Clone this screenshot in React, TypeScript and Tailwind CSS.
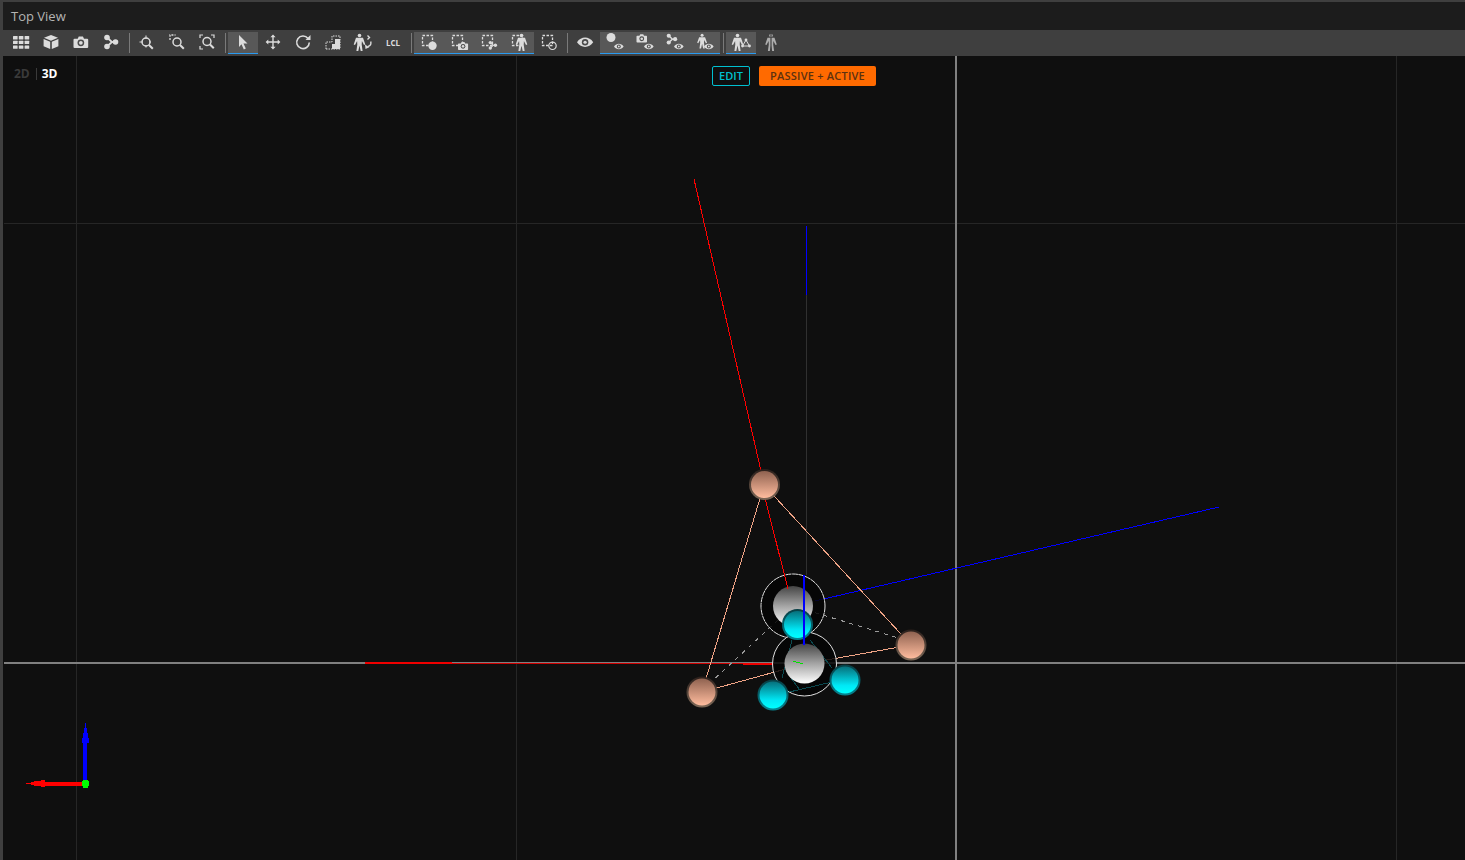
import type { ReactNode } from "react";

const fontFamily = "font-['Open_Sans','Noto_Sans',sans-serif]";
const ink = "#dcdcdc";

const Body = ({ x = 0, y = 0, s = 1 }: { x?: number; y?: number; s?: number }) => (
  <g transform={`translate(${x} ${y}) scale(${s})`}>
    <circle cx="6" cy="2" r="1.800" />
    <path d="M2.500 4.300h7l2.300 6.700-1.300.5L8.400 7.500 8.200 11l.9 6.500H7.200L6 12l-1.200 5.500H2.900l.9-6.500-.2-3.500-2.100 4-1.300-.5z" />
  </g>
);

const Dashed = () => (
  <rect x="3.500" y="3.500" width="10" height="10" fill="none" stroke={ink} strokeWidth="1.300" strokeDasharray="2.500 1.500" />
);

const Eye = ({ x = 0, y = 0, s = 1 }: { x?: number; y?: number; s?: number }) => (
  <g transform={`translate(${x} ${y}) scale(${s})`}>
    <path d="M0 5c3-4.600 9-4.600 12 0-3 4.600-9 4.600-12 0z" />
    <circle cx="6" cy="5" r="2.400" fill="#4a4a4a" />
    <circle cx="6" cy="5" r="1.200" />
  </g>
);

const Cam = ({ x = 0, y = 0, s = 1 }: { x?: number; y?: number; s?: number }) => (
  <g transform={`translate(${x} ${y}) scale(${s})`}>
    <path d="M1 3h3l1-2h4l1 2h3a1 1 0 0 1 1 1v7a1 1 0 0 1-1 1H1a1 1 0 0 1-1-1V4a1 1 0 0 1 1-1z" />
    <circle cx="7" cy="7" r="3.200" fill="#4a4a4a" />
    <circle cx="7" cy="7" r="1.800" />
  </g>
);

const Nodes = ({ x = 0, y = 0, s = 1 }: { x?: number; y?: number; s?: number }) => (
  <g transform={`translate(${x} ${y}) scale(${s})`}>
    <path d="M3 3l5 4.500L3 12" fill="none" stroke={ink} strokeWidth="1.800" />
    <path d="M8 7.500h4" stroke={ink} strokeWidth="1.800" />
    <circle cx="3" cy="3" r="2.800" />
    <circle cx="3" cy="12" r="2.800" />
    <circle cx="11.500" cy="7.500" r="2.800" />
  </g>
);

const Lens = ({ cx = 9, cy = 9, r = 4 }: { cx?: number; cy?: number; r?: number }) => (
  <>
    <circle cx={cx} cy={cy} r={r} fill="none" stroke={ink} strokeWidth="1.500" />
    <path d={`M${cx + r - 1} ${cy + r - 1}l3.800 3.800`} stroke={ink} strokeWidth="2" />
  </>
);

const icons: Record<string, ReactNode> = {
  grid: (
    <>
      {[4, 8.700, 13.400].flatMap((y) =>
        [2, 7.800, 13.600].map((x) => <rect key={`${x}-${y}`} x={x} y={y} width="4.600" height="3.400" rx="0.500" />)
      )}
    </>
  ),
  cube: (
    <>
      <path d="M10 3l7 2.800-7 2.900-7-2.900z" />
      <path d="M2.600 7l6.600 2.800V17l-6.600-2.800zM17.400 7l-6.600 2.800V17l6.600-2.800z" />
    </>
  ),
  camera: <Cam x={2.500} y={3.500} s={1.050} />,
  nodes: <Nodes x={3} y={2.500} s={1} />,
  zoomTarget: (
    <>
      <Lens cx={9} cy={10} r={4} />
      <path d="M9 3.500v3.500M9 13v2.500M2.500 10H6M12 10h2" stroke={ink} strokeWidth="1.100" />
    </>
  ),
  zoomRegion: (
    <>
      <path d="M3 8V3h5.500" fill="none" stroke={ink} strokeWidth="1.300" strokeDasharray="2 1.200" />
      <Lens cx={10} cy={10} r={4} />
    </>
  ),
  zoomAll: (
    <>
      <path d="M3 6V3h3M14 3h3v3M3 14v3h3" fill="none" stroke={ink} strokeWidth="1.200" />
      <Lens cx={10} cy={9.500} r={4} />
    </>
  ),
  pointer: <path d="M6 3l8.500 8.500h-4l2.300 5-2 .9-2.300-5.100L6 15z" />,
  move: (
    <path d="M10 2.500l2.600 2.700h-1.900v4h4V7.400l2.700 2.600-2.700 2.600v-1.900h-4v4h1.900L10 17.500l-2.600-2.800h1.900v-4h-4v1.900L2.600 10l2.700-2.600v1.900h4v-4H7.400z" />
  ),
  rotate: (
    <>
      <path d="M15 6.500a6.300 6.300 0 1 0 1.300 4" fill="none" stroke={ink} strokeWidth="1.600" />
      <path d="M12.500 8h5V3z" />
    </>
  ),
  scale: (
    <>
      <path d="M3 17V10h6V4h8v13z" fill="none" stroke={ink} strokeWidth="1" strokeDasharray="1.500 1" />
      <path d="M9 17v-5h3V7h5v10z" />
    </>
  ),
  bodyMove: (
    <>
      <Body x={0.500} y={1.500} />
      <path d="M14.500 3.500l2 2-2 2M15 14.500c2.500-.8 3.300-3 2.700-5" fill="none" stroke={ink} strokeWidth="1.400" />
      <path d="M12 12.500l.5 4.500 3.800-1.700z" />
    </>
  ),
  selMarker: (
    <>
      <Dashed />
      <circle cx="13.500" cy="13.800" r="4.200" />
    </>
  ),
  selCam: (
    <>
      <Dashed />
      <Cam x={9} y={9.300} s={0.720} />
    </>
  ),
  selNodes: (
    <>
      <Dashed />
      <Nodes x={9.500} y={8.800} s={0.600} />
    </>
  ),
  selBody: (
    <>
      <Dashed />
      <Body x={6.500} y={1.500} />
    </>
  ),
  selOutline: (
    <>
      <Dashed />
      <circle cx="13.500" cy="13.800" r="3.700" fill="none" stroke={ink} strokeWidth="1.200" />
    </>
  ),
  eye: <Eye x={2} y={3.500} s={1.350} />,
  eyeMarker: (
    <>
      <circle cx="6" cy="5.500" r="4.500" />
      <Eye x={9} y={10.500} s={0.800} />
    </>
  ),
  eyeCam: (
    <>
      <Cam x={1.500} y={1.500} s={0.750} />
      <Eye x={9} y={10.500} s={0.800} />
    </>
  ),
  eyeNodes: (
    <>
      <Nodes x={1.500} y={1.500} s={0.750} />
      <Eye x={9} y={10.500} s={0.800} />
    </>
  ),
  eyeBody: (
    <>
      <Body x={2} y={1.500} s={0.850} />
      <Eye x={9} y={10.500} s={0.800} />
    </>
  ),
  bones: (
    <>
      <Body x={0.500} y={1.500} />
      <path d="M15 8l-3.500 6h7z" fill="none" stroke={ink} strokeWidth="1" />
      <circle cx="15" cy="8" r="1.400" />
      <circle cx="11.500" cy="14" r="1.400" />
      <circle cx="18.500" cy="14" r="1.400" />
    </>
  ),
  skeleton: (
    <g opacity="0.700">
      <Body x={4} y={1.500} />
      <path d="M10 1v19" stroke="#3f3f3f" strokeWidth="1.200" />
    </g>
  ),
};

const Btn = ({ icon, active }: { icon: string; active?: boolean }) => (
  <div className={`flex w-[30px] items-center justify-center ${active ? "h-[21px] bg-[#585858]" : "h-[22px]"}`}>
    <svg width="20" height="20" viewBox="0 1 20 20" fill={ink}>
      {icons[icon]}
    </svg>
  </div>
);

// several buttons sharing one blue underline
const Group = ({ items }: { items: string[] }) => (
  <div className="flex border-b border-[#2a9bf0]">
    {items.map((i) => (
      <Btn key={i} icon={i} active />
    ))}
  </div>
);

const Sep = () => (
  <div className="flex h-[24px] w-[6px] items-center justify-center">
    <div className="h-[20px] w-px bg-[#7a7a7a]" />
  </div>
);

const Toolbar = () => (
  <div className="flex h-[26px] items-center bg-[#3f3f3f] pl-[3px]">
    <Btn icon="grid" />
    <Btn icon="cube" />
    <Btn icon="camera" />
    <Btn icon="nodes" />
    <Sep />
    <Btn icon="zoomTarget" />
    <Btn icon="zoomRegion" />
    <Btn icon="zoomAll" />
    <Sep />
    <Group items={["pointer"]} />
    <Btn icon="move" />
    <Btn icon="rotate" />
    <Btn icon="scale" />
    <Btn icon="bodyMove" />
    <div className="flex h-[22px] w-[30px] items-center justify-center pb-[1px] text-[8px] font-bold text-[#dcdcdc]">LCL</div>
    <Sep />
    <Group items={["selMarker", "selCam", "selNodes", "selBody"]} />
    <Btn icon="selOutline" />
    <Sep />
    <Btn icon="eye" />
    <Group items={["eyeMarker", "eyeCam", "eyeNodes", "eyeBody"]} />
    <Sep />
    <Group items={["bones"]} />
    <Btn icon="skeleton" />
  </div>
);

const Ball = ({ cx, cy, kind }: { cx: number; cy: number; kind: "peach" | "cyan" }) => (
  <>
    <circle cx={cx} cy={cy} r={15.500} fill={`url(#${kind}Rim)`} />
    <circle cx={cx} cy={cy} r={13.500} fill={`url(#${kind})`} />
  </>
);

// the 3D scene, drawn in page coordinates
const Scene = () => (
  <svg className="absolute inset-0 h-full w-full" viewBox="3 56 1462 804">
    <defs>
      <linearGradient id="peach" x1="0" y1="0" x2="0" y2="1">
        <stop offset="0" stopColor="#8f6250" />
        <stop offset="1" stopColor="#ffbc9e" />
      </linearGradient>
      <linearGradient id="peachRim" x1="0" y1="0" x2="0" y2="1">
        <stop offset="0" stopColor="#2a1e1a" />
        <stop offset="1" stopColor="#7d6857" />
      </linearGradient>
      <linearGradient id="cyan" x1="0" y1="0" x2="0" y2="1">
        <stop offset="0" stopColor="#06707c" />
        <stop offset="0.700" stopColor="#00e8f6" />
        <stop offset="1" stopColor="#00ffff" />
      </linearGradient>
      <linearGradient id="cyanRim" x1="0" y1="0" x2="0" y2="1">
        <stop offset="0" stopColor="#073e44" />
        <stop offset="1" stopColor="#058390" />
      </linearGradient>
      <linearGradient id="white" x1="0" y1="0" x2="0" y2="1">
        <stop offset="0" stopColor="#444444" />
        <stop offset="0.500" stopColor="#a4a4a4" />
        <stop offset="1" stopColor="#ffffff" />
      </linearGradient>
    </defs>

    <g shapeRendering="crispEdges">
      <g stroke="#262626">
        <path d="M76.500 56v804M516.500 56v804M1396.500 56v804M4 223.500h1461" />
      </g>
      <path d="M806.500 295v280" stroke="#303030" />
      <path d="M956 56v804M4 663h1461" stroke="#808080" strokeWidth="2" />
      <path d="M365 663h87M743 664h31" stroke="#f00000" strokeWidth="2" />
      <path d="M452 663.500h291" stroke="#d00000" />

      <path d="M694 179L761 471" stroke="#ff0000" />
      <path d="M806.500 226v69" stroke="#0000ff" />
      <path d="M1219 507L815 601" stroke="#0000ff" />
      <path d="M764 485L702 692M764 485L911 645M702 692L804 664M911 645L804 664" stroke="#f0a486" />
      <g stroke="#9a9a9a" strokeDasharray="4 5">
        <path d="M709 684L793 606M905 640L793 606" />
      </g>
    </g>

    <circle cx="793" cy="606" r="32" fill="#050505" fillOpacity="0.850" stroke="#e0e0e0" strokeWidth="1" strokeDasharray="6 0.500" />
    <circle cx="793" cy="606" r="20" fill="url(#white)" />
    <circle cx="804.500" cy="664" r="32" fill="#050505" fillOpacity="0.850" stroke="#e0e0e0" strokeWidth="1" />
    <path d="M792 640L782 678M810 640L832 668M785 693L832 682M790 677L800 690" stroke="#0b4a50" strokeWidth="1" shapeRendering="crispEdges" />
    <circle cx="804.500" cy="663.500" r="20" fill="url(#white)" />

    <Ball cx={797.500} cy={624.500} kind="cyan" />
    <Ball cx={773} cy={695} kind="cyan" />
    <Ball cx={845} cy={680} kind="cyan" />

    <g shapeRendering="crispEdges">
      <path d="M803.500 575v70" stroke="#0000ff" strokeWidth="1" />
      <path d="M804.500 575v70" stroke="#0000ff" strokeWidth="1" />
      <path d="M793 661l10 3" stroke="#00e000" strokeWidth="1" />
      <path d="M765 498l23 91" stroke="#ff0000" strokeWidth="1" />
    </g>

    <Ball cx={764.500} cy={484.500} kind="peach" />
    <Ball cx={911} cy={645} kind="peach" />
    <Ball cx={702} cy={692} kind="peach" />

    <g shapeRendering="crispEdges">
      <path d="M83 784v-46h4v46zM85 723h1v5h1v5h1v5h1v5h-7v-5h1v-5h1v-5h1z" fill="#0000ff" />
      <path d="M85 782v4H41v-4zM26 783h5v-1h3v-1h7v-1h4v7h-4v-1h-7v-1h-3v-1h-5z" fill="#ff0000" />
      <path d="M83 780h5v1h1v5h-1v2h-5v-2h-1v-5h1z" fill="#00ff00" />
    </g>
  </svg>
);

export default function App() {
  return (
    <div className={`flex h-[860px] w-[1465px] flex-col overflow-hidden border-t-2 border-l-[3px] border-[#3f3f3f] bg-[#0f0f0f] ${fontFamily}`}>
      <div className="flex h-[28px] shrink-0 items-center bg-[#1c1c1c] pl-[8px] pt-[2px] text-[13px] text-[#b4b4b4]">Top View</div>
      <Toolbar />
      <div className="relative flex-1">
        <Scene />
        <div className="absolute left-[11px] top-[9px] flex items-center text-[12px] font-bold leading-[18px]">
          <span className="text-[#3a3a3a]">2D</span>
          <span className="ml-[6px] mr-[5px] h-[12px] w-px bg-[#3a3a3a]" />
          <span className="text-white">3D</span>
        </div>
        <div className="absolute left-[709px] top-[10px] flex items-center gap-[9px] text-[11px] font-semibold">
          <div className="flex h-[20px] w-[38px] items-center justify-center rounded-[2px] border border-[#00c0d0] text-[#00c0d0]">EDIT</div>
          <div className="flex h-[20px] w-[117px] items-center justify-center rounded-[2px] bg-[#ff6a00] tracking-[0.02em] text-[#5c3110]">PASSIVE + ACTIVE</div>
        </div>
      </div>
    </div>
  );
}
